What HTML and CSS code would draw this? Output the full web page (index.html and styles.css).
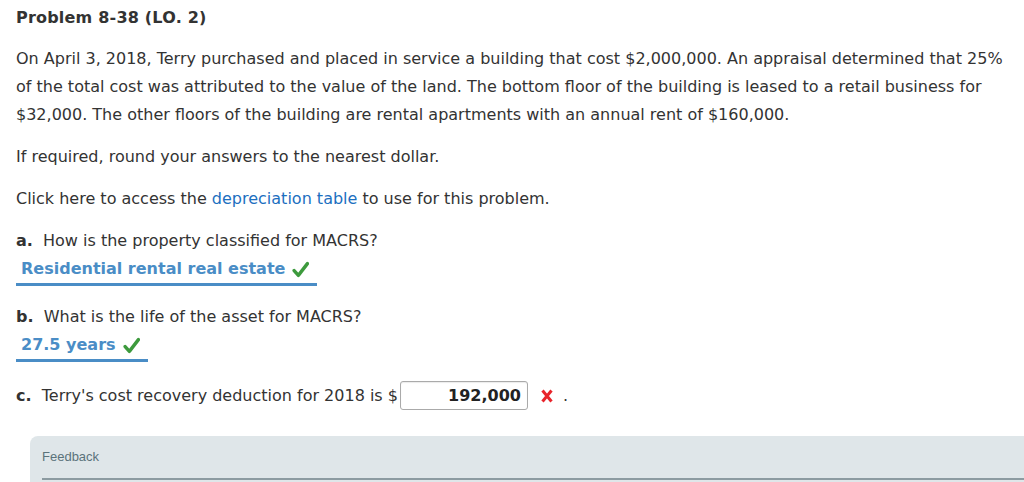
FILE: index.html
```html
<!DOCTYPE html>
<html>
<head>
<meta charset="utf-8">
<link rel="stylesheet" href="styles.css">
</head>
<body>
<div class="page">
  <h1 class="title">Problem 8-38 (LO. 2)</h1>
  <p class="para">On April 3, 2018, Terry purchased and placed in service a building that cost $2,000,000. An appraisal determined that 25% of the total cost was attributed to the value of the land. The bottom floor of the building is leased to a retail business for $32,000. The other floors of the building are rental apartments with an annual rent of $160,000.</p>
  <p class="para">If required, round your answers to the nearest dollar.</p>
  <p class="para">Click here to access the <a class="link" href="#">depreciation table</a> to use for this problem.</p>
  <div class="q">
    <div class="qline"><b>a.</b>&nbsp; How is the property classified for MACRS?</div>
    <div class="answer"><span>Residential rental real estate</span><svg class="check" viewBox="0 0 16 16" width="17" height="17"><path d="M2 9 L6 13.5 L14.5 2.5" fill="none" stroke="#3d9a3d" stroke-width="3.2" stroke-linecap="round" stroke-linejoin="round"/></svg></div>
  </div>
  <div class="q">
    <div class="qline"><b>b.</b>&nbsp; What is the life of the asset for MACRS?</div>
    <div class="answer"><span>27.5 years</span><svg class="check" viewBox="0 0 16 16" width="17" height="17"><path d="M2 9 L6 13.5 L14.5 2.5" fill="none" stroke="#3d9a3d" stroke-width="3.2" stroke-linecap="round" stroke-linejoin="round"/></svg></div>
  </div>
  <div class="qc">
    <b>c.</b>&nbsp; Terry's cost recovery deduction for 2018 is $<span class="input">192,000</span><svg class="cross" viewBox="0 0 12 14" width="12" height="14"><path d="M1.5 1.5 L10.5 12.5 M10.5 1.5 L1.5 12.5" stroke="#e8242b" stroke-width="3" stroke-linecap="butt"/></svg><span class="dot">.</span>
  </div>
  <div class="feedback">
    <div class="fb-title">Feedback</div>
    <div class="fb-line"></div>
  </div>
</div>
</body>
</html>
```
FILE: styles.css
```css
html, body { margin: 0; padding: 0; background: #fff; }
body { font-family: "DejaVu Sans", Verdana, sans-serif; color: #333; font-size: 16px; overflow: hidden; }
.page { padding: 8px 0 0 16px; }
.title { font-size: 16px; font-weight: bold; letter-spacing: 0.2px; margin: 0 0 17px 0; line-height: 20px; color: #333; }
.para { margin: 0 0 14px 0; line-height: 28px; padding-right: 14px; }
.link { color: #1c6fbf; text-decoration: none; }
.q { margin: 0 0 17px 0; }
.qline { line-height: 28px; }
.answer { display: inline-flex; align-items: center; gap: 7px; padding: 2px 8px 2px 5px; border-bottom: 3px solid #4a8dc6; color: #4a8dc6; font-weight: bold; line-height: 24px; }
.check { display: block; }
.qc { display: flex; align-items: center; line-height: 28px; margin-top: 19px; }
.input { display: inline-block; width: 120px; height: 27px; line-height: 27px; border: 1px solid #aaa; border-radius: 3px; text-align: right; padding-right: 6px; margin-left: 2px; font-weight: bold; color: #222; box-shadow: inset 0 1px 1px rgba(0,0,0,0.08); }
.cross { margin-left: 13px; }
.dot { margin-left: 10px; }
.feedback { margin: 26px 0 0 14px; background: #dfe6e9; border-top-left-radius: 8px; height: 60px; padding: 13px 0 0 12px; box-sizing: border-box; }
.fb-title { font-family: "Liberation Sans", Arial, sans-serif; font-size: 13px; color: #5b737b; line-height: 16px; }
.fb-line { margin-top: 13px; border-top: 2px solid #8c9ba1; }
```
